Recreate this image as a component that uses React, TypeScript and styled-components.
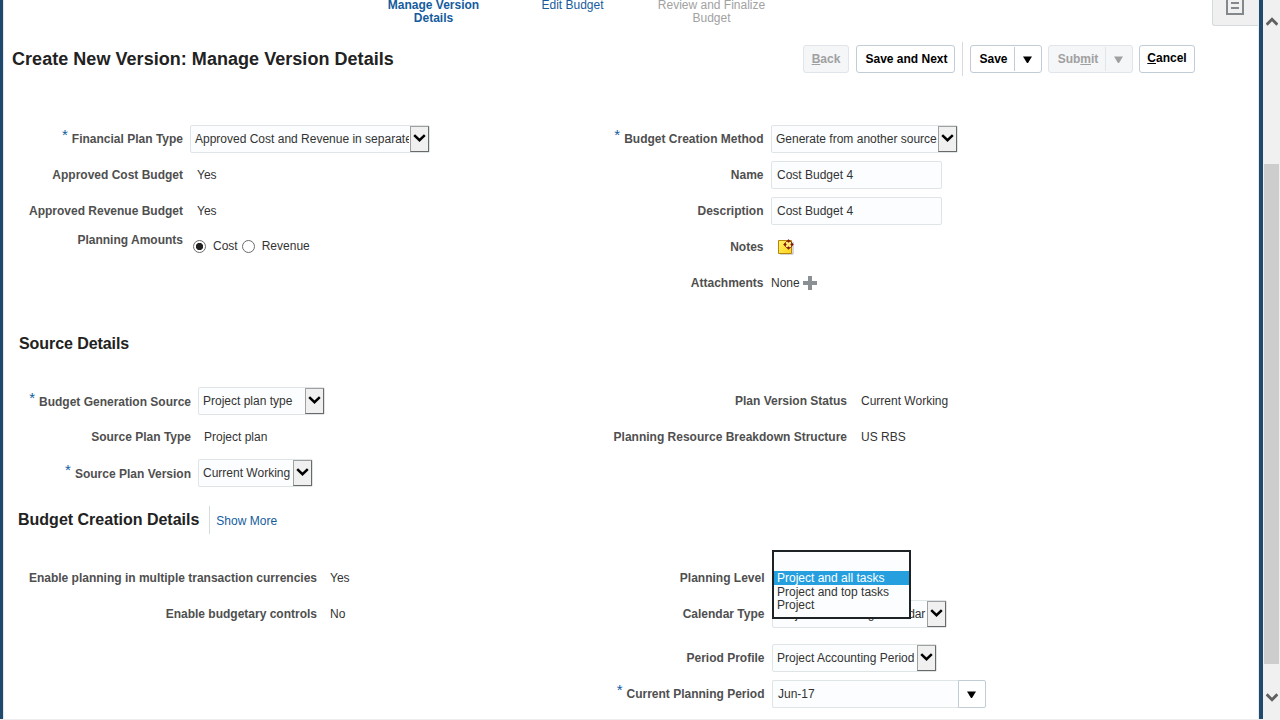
import React from "react";
import styled, { createGlobalStyle, css } from "styled-components";

const GlobalStyle = createGlobalStyle`
  * { box-sizing: border-box; }
  body {
    margin: 0;
    overflow: hidden;
    background: #fff;
    font: 12px/14px "Liberation Sans", Arial, sans-serif;
    color: #333;
  }
`;

const Shell = styled.div`
  display: flex;
  width: 1280px;
  height: 720px;
  overflow: hidden;
`;

const Frame = styled.div`
  display: flex;
  flex: 1;
  min-width: 0;
  flex-direction: column;
  border-bottom: 1px solid #ededed;
`;

const Window = styled.main`
  flex: 1;
  min-height: 0;
  overflow: hidden;
  border-left: 3px solid #1f4a6d;
  border-right: 4px solid #1f4a6d;
`;

const Page = styled.div`
  height: 100%;
  border-left: 1px solid #dfe8ef;
  border-right: 1px solid #ededed;
`;

const TopBar = styled.header`
  display: flex;
  height: 42px;
  align-items: flex-start;
  justify-content: flex-end;
`;

const Train = styled.nav`
  display: grid;
  grid-template-columns: repeat(3, 139px);
  margin-right: 431px;
`;

const Step = styled.a<{ $state: "current" | "next" | "disabled" }>`
  display: flex;
  flex-direction: column;
  margin-top: -1px;
  line-height: 13px;
  text-align: center;
  color: ${(p) => (p.$state === "disabled" ? "#a2a2a2" : "#145c9e")};
  font-weight: ${(p) => (p.$state === "current" ? 700 : 400)};
`;

const PanelTab = styled.div`
  display: flex;
  width: 46px;
  height: 26px;
  padding-left: 13px;
  background: #f0f0f0;
  border: 1px solid #d5dadd;
  border-top: 0;
  border-right: 0;
  border-bottom-left-radius: 3px;
`;

const TitleBar = styled.div`
  display: flex;
  height: 34px;
  align-items: center;
  padding: 0 63px 0 8px;
`;

const Title = styled.h1`
  flex: 1;
  margin: 0;
  font-size: 18px;
  line-height: 22px;
  letter-spacing: 0.04px;
  color: #222;
`;

const Actions = styled.div`
  display: flex;
  align-items: center;
`;

const Button = styled.button<{ $width: number; $gap?: number; $lift?: boolean }>`
  display: flex;
  width: ${(p) => p.$width}px;
  height: 28px;
  margin: 0 0 0 ${(p) => p.$gap ?? 0}px;
  padding: ${(p) => (p.$lift ? "0 0 2px" : "0")};
  align-items: center;
  justify-content: center;
  font: 700 12px/14px "Liberation Sans", Arial, sans-serif;
  color: #000;
  background: #fff;
  border: 1px solid #c0ccd6;
  border-radius: 3px;
  &:disabled {
    color: #a0a0a0;
    background: #f4f6f8;
    border-color: #dfe5ea;
  }
`;

const ButtonText = styled.span`
  flex: 1;
  padding-left: 2px;
  text-align: center;
`;

const ButtonArrow = styled.span<{ $width: number; $dim?: boolean }>`
  display: flex;
  width: ${(p) => p.$width}px;
  height: 24px;
  padding-right: 2px;
  align-items: center;
  justify-content: center;
  border-left: 1px solid ${(p) => (p.$dim ? "#dfe5ea" : "#c0ccd6")};
`;

const Divider = styled.span<{ $height: number }>`
  width: 1px;
  height: ${(p) => p.$height}px;
  background: #d6dbdf;
`;

const Columns = styled.section<{ $top: number; $height: number }>`
  display: grid;
  grid-template-columns: 600px 1fr;
  height: ${(p) => p.$height}px;
  padding-top: ${(p) => p.$top}px;
  align-items: start;
`;

const Column = styled.div`
  display: flex;
  flex-direction: column;
`;

const Row = styled.div<{ $label: number; $gap: number; $before?: number }>`
  display: grid;
  grid-template-columns: ${(p) => p.$label}px auto;
  column-gap: ${(p) => p.$gap}px;
  height: 36px;
  margin-top: ${(p) => p.$before ?? 0}px;
  align-items: center;
  justify-content: start;
`;

const Label = styled.label<{ $shift?: number }>`
  padding-top: ${(p) => Math.max(p.$shift ?? 0, 0)}px;
  padding-bottom: ${(p) => Math.max(-(p.$shift ?? 0), 0)}px;
  text-align: right;
  white-space: nowrap;
  font-weight: 700;
  color: #4f4f4f;
`;

const Star = styled.span`
  margin-right: 4px;
  font-size: 15px;
  line-height: 0;
  vertical-align: 3px;
  font-weight: 400;
  color: #145c9e;
`;

const Value = styled.span<{ $indent?: number }>`
  padding-left: ${(p) => p.$indent ?? 0}px;
  white-space: nowrap;
`;

const fieldBox = css<{ $width: number }>`
  display: flex;
  width: ${(p) => p.$width}px;
  height: 28px;
  align-items: center;
  background: #fcfdfe;
  border: 1px solid #dfe4e7;
  border-radius: 2px;
`;

const TextBox = styled.div<{ $width: number }>`
  ${fieldBox}
  padding-left: 5px;
`;

const SelectBox = styled.div<{ $width: number }>`
  ${fieldBox}
`;

const SelectText = styled.span<{ $tight?: boolean }>`
  flex: 1;
  min-width: 0;
  margin: 0 1px 0 4px;
  overflow: hidden;
  white-space: nowrap;
  letter-spacing: ${(p) => (p.$tight ? "-0.12px" : "normal")};
`;

const SelectButton = styled.span`
  display: flex;
  width: 19px;
  height: 26px;
  padding-bottom: 2px;
  align-items: center;
  justify-content: center;
  background: #f0f0f0;
  border: 1px solid;
  border-color: #a0a0a0 #696969 #696969 #a0a0a0;
`;

const PickerBox = styled.div`
  display: flex;
  width: 214px;
  height: 28px;
`;

const PickerText = styled.span`
  display: flex;
  width: 186px;
  padding-left: 5px;
  align-items: center;
  background: #fcfdfe;
  border: 1px solid #dfe4e7;
  border-right: 0;
  border-radius: 2px 0 0 2px;
`;

const PickerButton = styled.span`
  display: flex;
  width: 28px;
  padding: 1px 2px 0 0;
  align-items: center;
  justify-content: center;
  background: #fff;
  border: 1px solid #c0ccd6;
  border-radius: 0 2px 2px 0;
`;

const Heading = styled.h2<{ $tight?: boolean }>`
  margin: 0;
  font-size: 16px;
  line-height: 20px;
  letter-spacing: ${(p) => (p.$tight ? "-0.07px" : "normal")};
  color: #222;
`;

const HeadingBar = styled.div<{ $left: number; $drop?: number }>`
  display: flex;
  height: 28px;
  padding: ${(p) => p.$drop ?? 0}px 0 0 ${(p) => p.$left}px;
  align-items: center;
`;

const ShowMore = styled.a`
  padding: 2px 0 0 6px;
  color: #145c9e;
`;

const RadioGroup = styled.div`
  display: flex;
  padding: 0 0 2px 3px;
  align-items: center;
`;

const Radio = styled.span<{ $on?: boolean }>`
  width: 13px;
  height: 13px;
  border: 1px solid #6b6b6b;
  border-radius: 50%;
  background: ${(p) => (p.$on ? "radial-gradient(circle, #222 0 3.3px, #fff 4px)" : "#fff")};
`;

const RadioText = styled.span`
  margin: 0 4px 0 7px;
`;

const IconSlot = styled.span<{ $left: number }>`
  display: inline-flex;
  margin-left: ${(p) => p.$left}px;
`;

const Inline = styled.div`
  display: flex;
  align-items: center;
`;

const ListAnchor = styled.div`
  position: relative;
  height: 28px;
`;

const OptionList = styled.div`
  position: absolute;
  z-index: 2;
  top: -14px;
  left: 0;
  width: 139px;
  height: 69px;
  padding-top: 19px;
  background: #fcfdfe;
  border: 2px solid #1d2226;
`;

const Option = styled.div<{ $active?: boolean; $height: number }>`
  height: ${(p) => p.$height}px;
  padding-left: 3px;
  line-height: 14px;
  white-space: nowrap;
  color: ${(p) => (p.$active ? "#fff" : "#333")};
  background: ${(p) => (p.$active ? "#269fdf" : "transparent")};
`;

const ScrollBar = styled.aside`
  display: flex;
  width: 17px;
  flex-direction: column;
  align-items: center;
  background: #f0f0f0;
`;

const ScrollEnd = styled.span<{ $top: number; $height: number }>`
  height: ${(p) => p.$height}px;
  padding-top: ${(p) => p.$top}px;
`;

const Thumb = styled.div`
  width: 15px;
  height: 500px;
  background: #cdcdcd;
`;

const Triangle = ({ color = "#000" }: { color?: string }) => (
  <svg width="9" height="7" viewBox="0 0 9 7">
    <path d="M0 .5h9L5 7H4z" fill={color} />
  </svg>
);

const Chevron = () => (
  <svg width="13" height="8" viewBox="0 0 13 8">
    <path d="M1.2 1.2 6.5 6.2l5.3-5" fill="none" stroke="#000" strokeWidth="2.5" />
  </svg>
);

const ScrollArrow = ({ up }: { up?: boolean }) => (
  <svg width="12" height="9" viewBox="0 0 12 9">
    <path d={up ? "M.6 7.6 6 2.2l5.4 5.4" : "M.6 1.4 6 6.8l5.4-5.4"} fill="none" stroke="#606060" strokeWidth="2.9" />
  </svg>
);

const NoteIcon = () => (
  <svg width="16" height="16" viewBox="0 0 16 16">
    <defs>
      <linearGradient id="note" x1="0" y1="0" x2="1" y2="1">
        <stop offset="0" stopColor="#fff36a" />
        <stop offset="1" stopColor="#ffd21a" />
      </linearGradient>
    </defs>
    <path d="M2 15h13V3" fill="none" stroke="#b0b0b0" />
    <path d="M.5 1.500h13v13H.5z" fill="url(#note)" stroke="#b5860b" />
    <path d="M10.500 1 15 5.500 10.500 10 6 5.500z" fill="#ffe873" stroke="#7c1608" strokeWidth="1.100" />
    <path d="M10.500 1v2.500M10.500 7.500V10M6 5.500h2.500M12.500 5.500H15" stroke="#7c1608" />
    <path d="M8 3l1 1M13 3l-1 1M8 8l1-1M13 8l-1-1" stroke="#fff3b0" />
  </svg>
);

const PlusIcon = () => (
  <svg width="14" height="14" viewBox="0 0 14 14">
    <path d="M5 0h4v5h5v4H9v5H5V9H0V5h5z" fill="#8b9095" />
  </svg>
);

const ListIcon = () => (
  <svg width="18" height="15" viewBox="0 0 18 15">
    <path d="M1 0v14h16V0" fill="none" stroke="#83888c" strokeWidth="2" />
    <path d="M5 3h8M5 8h8" stroke="#83888c" strokeWidth="2" />
  </svg>
);

const Select = ({ width, tight, children }: { width: number; tight?: boolean; children: string }) => (
  <SelectBox $width={width}>
    <SelectText $tight={tight}>{children}</SelectText>
    <SelectButton><Chevron /></SelectButton>
  </SelectBox>
);

interface FieldProps {
  label: string;
  labelWidth: number;
  gap: number;
  before?: number;
  shift?: number;
  required?: boolean;
  children: React.ReactNode;
}

const Field = ({ label, labelWidth, gap, before, shift, required, children }: FieldProps) => (
  <Row $label={labelWidth} $gap={gap} $before={before}>
    <Label $shift={shift}>
      {required && <Star>*</Star>}
      {label}
    </Label>
    {children}
  </Row>
);

export default function App() {
  return (
    <Shell>
      <GlobalStyle />
      <Frame>
        <Window>
          <Page>
            <TopBar>
              <Train>
                <Step $state="current"><span>Manage Version</span><span>Details</span></Step>
                <Step $state="next">Edit Budget</Step>
                <Step $state="disabled"><span>Review and Finalize</span><span>Budget</span></Step>
              </Train>
              <PanelTab><ListIcon /></PanelTab>
            </TopBar>

            <TitleBar>
              <Title>Create New Version: Manage Version Details</Title>
              <Actions>
                <Button $width={46} disabled><span><u>B</u>ack</span></Button>
                <Button $width={99} $gap={7}><ButtonText>Save and Next</ButtonText></Button>
                <IconSlot $left={7}><Divider $height={34} /></IconSlot>
                <Button $width={72} $gap={7}>
                  <ButtonText>Save</ButtonText>
                  <ButtonArrow $width={27}><Triangle /></ButtonArrow>
                </Button>
                <Button $width={85} $gap={6} disabled>
                  <ButtonText>Sub<u>m</u>it</ButtonText>
                  <ButtonArrow $width={27} $dim><Triangle color="#a0a0a0" /></ButtonArrow>
                </Button>
                <Button $width={56} $gap={6} $lift><span><u>C</u>ancel</span></Button>
              </Actions>
            </TitleBar>

            <Columns $top={45} $height={253}>
              <Column>
                <Field label="Financial Plan Type" labelWidth={179} gap={7} required>
                  <Select width={240}>Approved Cost and Revenue in separate versions</Select>
                </Field>
                <Field label="Approved Cost Budget" labelWidth={179} gap={7}><Value $indent={7}>Yes</Value></Field>
                <Field label="Approved Revenue Budget" labelWidth={179} gap={7}><Value $indent={7}>Yes</Value></Field>
                <Field label="Planning Amounts" labelWidth={179} gap={7} shift={-14}>
                  <RadioGroup>
                    <Radio $on /><RadioText>Cost</RadioText>
                    <Radio /><RadioText>Revenue</RadioText>
                  </RadioGroup>
                </Field>
              </Column>
              <Column>
                <Field label="Budget Creation Method" labelWidth={159.5} gap={7.5} required>
                  <Select width={187}>Generate from another source</Select>
                </Field>
                <Field label="Name" labelWidth={159.5} gap={7.5}><TextBox $width={171}>Cost Budget 4</TextBox></Field>
                <Field label="Description" labelWidth={159.5} gap={7.5}><TextBox $width={171}>Cost Budget 4</TextBox></Field>
                <Field label="Notes" labelWidth={159.5} gap={7.5}><IconSlot $left={7}><NoteIcon /></IconSlot></Field>
                <Field label="Attachments" labelWidth={159.5} gap={7.5}>
                  <Inline>None<IconSlot $left={3}><PlusIcon /></IconSlot></Inline>
                </Field>
              </Column>
            </Columns>

            <HeadingBar $left={15} $drop={2}><Heading $tight>Source Details</Heading></HeadingBar>
            <Columns $top={26} $height={149}>
              <Column>
                <Field label="Budget Generation Source" labelWidth={187} gap={7} shift={2} required>
                  <Select width={127}>Project plan type</Select>
                </Field>
                <Field label="Source Plan Type" labelWidth={187} gap={7}><Value $indent={6}>Project plan</Value></Field>
                <Field label="Source Plan Version" labelWidth={187} gap={7} shift={2} required>
                  <Select width={115}>Current Working</Select>
                </Field>
              </Column>
              <Column>
                <Field label="Plan Version Status" labelWidth={243} gap={14}><Value>Current Working</Value></Field>
                <Field label="Planning Resource Breakdown Structure" labelWidth={243} gap={14}><Value>US RBS</Value></Field>
              </Column>
            </Columns>

            <HeadingBar $left={14}>
              <Heading>Budget Creation Details</Heading>
              <IconSlot $left={10}><Divider $height={28} /></IconSlot>
              <ShowMore>Show More</ShowMore>
            </HeadingBar>
            <Columns $top={26} $height={185}>
              <Column>
                <Field label="Enable planning in multiple transaction currencies" labelWidth={313} gap={13}><Value>Yes</Value></Field>
                <Field label="Enable budgetary controls" labelWidth={313} gap={13}><Value>No</Value></Field>
              </Column>
              <Column>
                <Field label="Planning Level" labelWidth={160.5} gap={7.5}>
                  <ListAnchor>
                    <OptionList>
                      <Option $height={14} $active>Project and all tasks</Option>
                      <Option $height={13}>Project and top tasks</Option>
                      <Option $height={14}>Project</Option>
                    </OptionList>
                  </ListAnchor>
                </Field>
                <Field label="Calendar Type" labelWidth={160.5} gap={7.5}><Select width={175} tight>Project Accounting Calendar</Select></Field>
                <Field label="Period Profile" labelWidth={160.5} gap={7.5} before={8}><Select width={165}>Project Accounting Period</Select></Field>
                <Field label="Current Planning Period" labelWidth={160.5} gap={7.5} required>
                  <PickerBox>
                    <PickerText>Jun-17</PickerText>
                    <PickerButton><Triangle /></PickerButton>
                  </PickerBox>
                </Field>
              </Column>
            </Columns>
          </Page>
        </Window>
      </Frame>
      <ScrollBar>
        <ScrollEnd $top={15} $height={164}><ScrollArrow up /></ScrollEnd>
        <Thumb />
        <ScrollEnd $top={27} $height={56}><ScrollArrow /></ScrollEnd>
      </ScrollBar>
    </Shell>
  );
}
